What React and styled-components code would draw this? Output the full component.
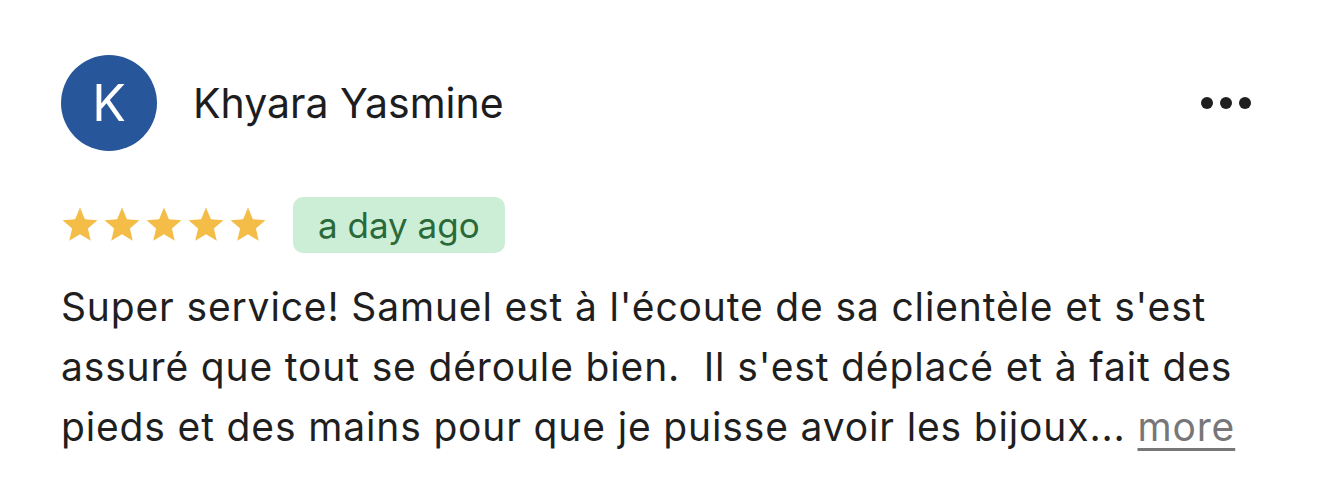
import React from "react";
import styled, { createGlobalStyle } from "styled-components";

const Global = createGlobalStyle`
  html, body { margin: 0; padding: 0; background: #fff; }
  body { font-family: Inter, "Noto Sans", sans-serif; -webkit-font-smoothing: antialiased; }
`;

const Card = styled.div`
  width: 1319px;
  height: 488px;
  box-sizing: border-box;
  padding: 55px 68px 0 61px;
  display: flex;
  flex-direction: column;
`;

const Header = styled.div`
  display: flex;
  align-items: center;
`;

const Avatar = styled.div`
  width: 96px;
  height: 96px;
  border-radius: 50%;
  background: #27569b;
  color: #fff;
  display: flex;
  align-items: center;
  justify-content: center;
  font-size: 50px;
  font-weight: 400;
  flex-shrink: 0;
`;

const Name = styled.div`
  margin-left: 36px;
  font-size: 41px;
  color: #1d1d1f;
  font-weight: 400;
  flex: 1;
`;

const MoreButton = styled.div`
  display: flex;
  gap: 7px;
  align-items: center;
`;

const Dot = styled.span`
  width: 12px;
  height: 12px;
  border-radius: 50%;
  background: #1f1f1f;
`;

const RatingRow = styled.div`
  display: flex;
  align-items: center;
  margin-top: 46px;
`;

const Stars = styled.div`
  display: flex;
  gap: 4px;
  margin-left: 0;
`;

const Badge = styled.div`
  margin-left: 26px;
  height: 56px;
  padding: 0 25px;
  display: flex;
  align-items: center;
  border-radius: 10px;
  background: #cdeed6;
  color: #2a6a38;
  font-size: 35px;
`;

const Body = styled.p`
  margin: 24px 0 0;
  font-size: 39px;
  letter-spacing: 0.85px;
  line-height: 60px;
  color: #1f1f1f;
  white-space: pre-wrap;
`;

const MoreLink = styled.span`
  color: #77777a;
  text-decoration: underline;
  text-underline-offset: 7px;
  text-decoration-thickness: 3px;
`;

const Star = () => (
  <svg width="38" height="38" viewBox="0 0 24 23">
    <path
      fill="#f4bd48"
      d="M12 0.5l3.1 7.3 7.9.7-6 5.2 1.8 7.8L12 17.4l-6.8 4.1 1.8-7.8-6-5.2 7.9-.7z"
    />
  </svg>
);

export default function App() {
  return (
    <>
      <Global />
      <Card>
        <Header>
          <Avatar>K</Avatar>
          <Name>Khyara Yasmine</Name>
          <MoreButton>
            <Dot />
            <Dot />
            <Dot />
          </MoreButton>
        </Header>
        <RatingRow>
          <Stars>
            {[0, 1, 2, 3, 4].map((i) => (
              <Star key={i} />
            ))}
          </Stars>
          <Badge>a day ago</Badge>
        </RatingRow>
        <Body>
          Super service! Samuel est à l'écoute de sa clientèle et s'est
          <br />
          assuré que tout se déroule bien.  Il s'est déplacé et à fait des
          <br />
          pieds et des mains pour que je puisse avoir les bijoux... <MoreLink>more</MoreLink>
        </Body>
      </Card>
    </>
  );
}
